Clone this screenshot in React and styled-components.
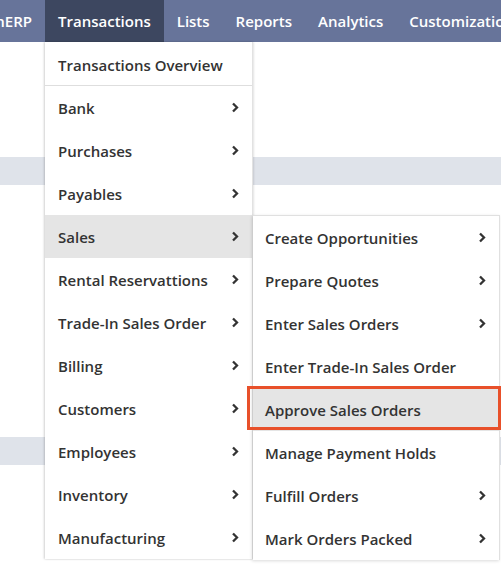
import React from "react";
import styled, { createGlobalStyle } from "styled-components";

const GlobalStyle = createGlobalStyle`
  html, body {
    margin: 0;
    padding: 0;
    background: #fff;
    font-family: "Open Sans", "Liberation Sans", sans-serif;
  }
`;

const tabs = ["hERP", "Transactions", "Lists", "Reports", "Analytics", "Customization"];

const mainItems = [
  { label: "Bank", sub: true },
  { label: "Purchases", sub: true },
  { label: "Payables", sub: true },
  { label: "Sales", sub: true, open: true },
  { label: "Rental Reservattions", sub: true },
  { label: "Trade-In Sales Order", sub: true },
  { label: "Billing", sub: true },
  { label: "Customers", sub: true },
  { label: "Employees", sub: true },
  { label: "Inventory", sub: true },
  { label: "Manufacturing", sub: true },
];

const salesItems = [
  { label: "Create Opportunities", sub: true },
  { label: "Prepare Quotes", sub: true },
  { label: "Enter Sales Orders", sub: true },
  { label: "Enter Trade-In Sales Order" },
  { label: "Approve Sales Orders", marked: true },
  { label: "Manage Payment Holds" },
  { label: "Fulfill Orders", sub: true },
  { label: "Mark Orders Packed", sub: true },
];

const Chevron = () => (
  <svg width="8" height="11" viewBox="0 0 8 11">
    <path d="M2 1.5 L6 5.5 L2 9.5" fill="none" stroke="#333" strokeWidth="2.3" />
  </svg>
);

const App = () => {
  return (
    <Page>
      <GlobalStyle />
      <NavBar>
        {tabs.map((t, i) => (
          <Tab key={t} first={i === 0} active={t === "Transactions"}>
            {t}
            {t === "Transactions" && (
              <Dropdown>
                <Overview>Transactions Overview</Overview>
                {mainItems.map((m) => (
                  <Item key={m.label} open={m.open}>
                    <span>{m.label}</span>
                    {m.sub && <Chevron />}
                    {m.open && (
                      <SubMenu>
                        {salesItems.map((s) => (
                          <SubItem key={s.label} marked={s.marked}>
                            <span>{s.label}</span>
                            {s.sub && <Chevron />}
                          </SubItem>
                        ))}
                      </SubMenu>
                    )}
                  </Item>
                ))}
              </Dropdown>
            )}
          </Tab>
        ))}
      </NavBar>
      <Content>
        <Band />
        <Band second />
      </Content>
    </Page>
  );
};

export default App;

const Page = styled.div`
  width: 501px;
  height: 565px;
  overflow: hidden;
  position: relative;
`;

const NavBar = styled.div`
  display: flex;
  height: 42px;
  background: #67749a;
  position: relative;
  z-index: 2;
`;

const Tab = styled.div`
  position: relative;
  display: flex;
  align-items: center;
  justify-content: ${(p) => (p.first ? "flex-end" : "flex-start")};
  flex-shrink: 0;
  padding: 0 13px;
  ${(p) => p.first && "width: 45px; box-sizing: border-box;"}
  background: ${(p) => (p.active ? "#3d4760" : "transparent")};
  color: #fff;
  font-size: 15px;
  font-weight: 600;
  white-space: nowrap;
`;

const Dropdown = styled.div`
  position: absolute;
  top: 42px;
  left: 0;
  width: 207px;
  background: #fff;
  border-right: 1px solid #e2e2e2;
  box-shadow: -1px 0 2px rgba(0, 0, 0, 0.18), 1px 0 2px rgba(0, 0, 0, 0.1);
  color: #333;
  font-size: 15px;
  font-weight: 600;
`;

const Overview = styled.div`
  height: 44px;
  box-sizing: border-box;
  padding: 2px 13px 0;
  display: flex;
  align-items: center;
  border-bottom: 1px solid #dedede;
`;

const Item = styled.div`
  position: relative;
  height: 43px;
  display: flex;
  align-items: center;
  justify-content: space-between;
  padding: 0 13px;
  background: ${(p) => (p.open ? "#e5e5e5" : "#fff")};
`;

const SubMenu = styled.div`
  position: absolute;
  z-index: 3;
  top: 0;
  left: 100%;
  margin-left: 1px;
  width: 246px;
  background: #fff;
  border-top: 1px solid #e0e0e0;
  border-right: 1px solid #e0e0e0;
  box-shadow: -1px 1px 3px rgba(0, 0, 0, 0.15);
`;

const SubItem = styled.div`
  position: relative;
  height: 43px;
  display: flex;
  align-items: center;
  justify-content: space-between;
  padding: 0 13px 0 12px;
  background: ${(p) => (p.marked ? "#e5e5e5" : "#fff")};

  ${(p) =>
    p.marked &&
    `
    &::after {
      content: "";
      position: absolute;
      left: -6px;
      right: -2px;
      top: -2px;
      bottom: 1px;
      border: 3px solid #e8502a;
    }
  `}
`;

const Content = styled.div`
  display: flex;
  flex-direction: column;
  padding-top: 115px;
`;

const Band = styled.div`
  height: 28px;
  background: #dfe3ea;
  margin-top: ${(p) => (p.second ? "252px" : "0")};
`;
